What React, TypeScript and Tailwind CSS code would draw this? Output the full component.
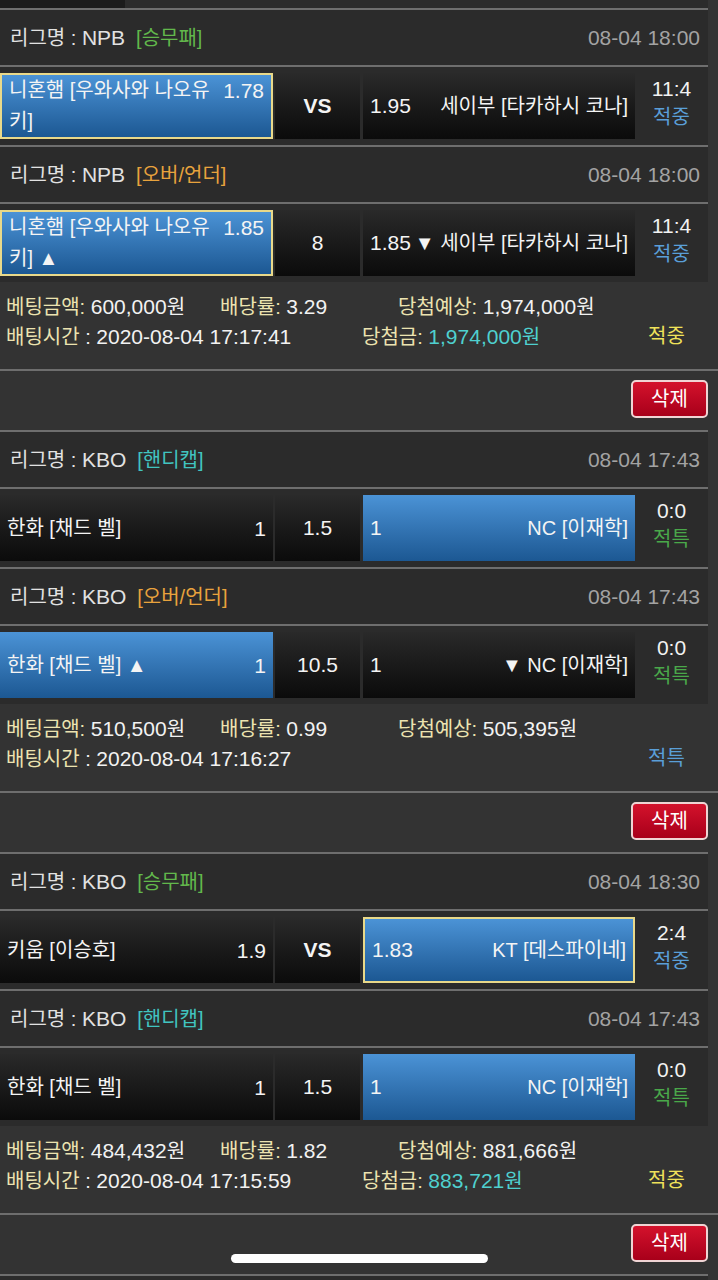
type Pick = 'home' | 'away';

type Match = {
  league: string;
  type: '승무패' | '오버/언더' | '핸디캡';
  date: string;
  home: string[];
  homeOdds: string;
  mid: string;
  bold?: boolean;
  awayOdds: string;
  away: string;
  pick: Pick;
  outlined?: boolean;
  score: string;
  result: '적중' | '적특';
};

type Bet = {
  matches: Match[];
  amount: string;
  rate: string;
  expected: string;
  time: string;
  won?: string;
  status: '적중' | '적특';
};

const bets: Bet[] = [
  {
    matches: [
      {
        league: 'NPB', type: '승무패', date: '08-04 18:00',
        home: ['니혼햄 [우와사와 나오유', '키]'], homeOdds: '1.78',
        mid: 'VS', bold: true, awayOdds: '1.95', away: '세이부 [타카하시 코나]',
        pick: 'home', outlined: true, score: '11:4', result: '적중',
      },
      {
        league: 'NPB', type: '오버/언더', date: '08-04 18:00',
        home: ['니혼햄 [우와사와 나오유', '키] ▲'], homeOdds: '1.85',
        mid: '8', awayOdds: '1.85', away: '▼ 세이부 [타카하시 코나]',
        pick: 'home', outlined: true, score: '11:4', result: '적중',
      },
    ],
    amount: '600,000', rate: '3.29', expected: '1,974,000',
    time: '2020-08-04 17:17:41', won: '1,974,000', status: '적중',
  },
  {
    matches: [
      {
        league: 'KBO', type: '핸디캡', date: '08-04 17:43',
        home: ['한화 [채드 벨]'], homeOdds: '1',
        mid: '1.5', awayOdds: '1', away: 'NC [이재학]',
        pick: 'away', score: '0:0', result: '적특',
      },
      {
        league: 'KBO', type: '오버/언더', date: '08-04 17:43',
        home: ['한화 [채드 벨] ▲'], homeOdds: '1',
        mid: '10.5', awayOdds: '1', away: '▼ NC [이재학]',
        pick: 'home', score: '0:0', result: '적특',
      },
    ],
    amount: '510,500', rate: '0.99', expected: '505,395',
    time: '2020-08-04 17:16:27', status: '적특',
  },
  {
    matches: [
      {
        league: 'KBO', type: '승무패', date: '08-04 18:30',
        home: ['키움 [이승호]'], homeOdds: '1.9',
        mid: 'VS', bold: true, awayOdds: '1.83', away: 'KT [데스파이네]',
        pick: 'away', outlined: true, score: '2:4', result: '적중',
      },
      {
        league: 'KBO', type: '핸디캡', date: '08-04 17:43',
        home: ['한화 [채드 벨]'], homeOdds: '1',
        mid: '1.5', awayOdds: '1', away: 'NC [이재학]',
        pick: 'away', score: '0:0', result: '적특',
      },
    ],
    amount: '484,432', rate: '1.82', expected: '881,666',
    time: '2020-08-04 17:15:59', won: '883,721', status: '적중',
  },
];

const typeColor = (t: Match['type']) =>
  t === '승무패' ? 'text-[#62b84c]' : t === '오버/언더' ? 'text-[#e8a33d]' : 'text-[#41c4c0]';

// latin digits render a touch wider than the hangul in the original
const Num = ({ children, className = '' }: { children: React.ReactNode; className?: string }) => (
  <span className={`text-[21px] ${className}`}>{children}</span>
);

function LeagueHeader({ m }: { m: Match }) {
  return (
    <div className="w-[708px] h-[57px] border-t-2 border-[#6e6e6e] bg-[#2b2b2b] flex items-center justify-between pl-[10px] pr-[8px]">
      <div className="flex items-center">
        <span className="text-[#e2e2e2]">
          리그명 : <Num>{m.league}</Num>
        </span>
        <span className={`ml-[11px] ${typeColor(m.type)}`}>[{m.type}]</span>
      </div>
      <Num className="text-[#a3a3a3]">{m.date}</Num>
    </div>
  );
}

function TeamCell({ active, outlined, width, children }: { active: boolean; outlined?: boolean; width: string; children: React.ReactNode }) {
  const bg = active
    ? 'bg-linear-to-b from-[#4b93d6] to-[#1c5893]'
    : 'bg-linear-to-b from-[#2a2a2a] to-[#0b0b0b]';
  const border = outlined && active ? 'border-2 border-[#e9d98a]' : '';
  return (
    <div className={`${width} h-[66px] shrink-0 flex items-center px-[7px] text-[#f4f4f4] ${bg} ${border}`}>
      {children}
    </div>
  );
}

function MatchRow({ m }: { m: Match }) {
  return (
    <div className="w-[708px] h-[80px] border-t-2 border-[#6e6e6e] bg-[#2b2b2b] flex pt-[6px]">
      <TeamCell active={m.pick === 'home'} outlined={m.outlined} width="w-[273px]">
        <div className="flex-1 flex items-start justify-between leading-[31px]">
          <div className="whitespace-nowrap">
            {m.home.map((l, i) => (
              <div key={i}>{l}</div>
            ))}
          </div>
          <Num className="pl-2">{m.homeOdds}</Num>
        </div>
      </TeamCell>
      <div
        className={`ml-[2px] w-[85px] h-[66px] shrink-0 flex items-center justify-center bg-linear-to-b from-[#2a2a2a] to-[#0b0b0b] text-[#f4f4f4] text-[21px] ${m.bold ? 'font-bold' : ''}`}
      >
        {m.mid}
      </div>
      <div className="ml-[3px]">
        <TeamCell active={m.pick === 'away'} outlined={m.outlined} width="w-[272px]">
          <div className="flex-1 flex items-center justify-between whitespace-nowrap">
            <Num>{m.awayOdds}</Num>
            <span>{m.away}</span>
          </div>
        </TeamCell>
      </div>
      <div className="flex-1 h-[66px] pb-[6px] flex flex-col items-center justify-center leading-[29px]">
        <Num className="text-[#f2f2f2]">{m.score}</Num>
        <span className={m.result === '적중' ? 'text-[#5a9fd8]' : 'text-[#4aa84a]'}>{m.result}</span>
      </div>
    </div>
  );
}

const Label = ({ children }: { children: React.ReactNode }) => (
  <span className="text-[#ece3b0]">{children}</span>
);

function Summary({ b }: { b: Bet }) {
  return (
    <div className="w-full h-[87px] pt-[10px] pl-[6px] leading-[29px] text-[#f2f2f2] whitespace-nowrap">
      <div className="flex">
        <span className="w-[214px]"><Label>베팅금액:</Label> <Num>{b.amount}</Num>원</span>
        <span className="w-[178px]"><Label>배당률:</Label> <Num>{b.rate}</Num></span>
        <span><Label>당첨예상:</Label> <Num>{b.expected}</Num>원</span>
      </div>
      <div className="flex">
        <span className="w-[356px]"><Label>배팅시간</Label> : <Num>{b.time}</Num></span>
        <span className="w-[286px]">
          {b.won && (
            <>
              <Label>당첨금:</Label>{' '}
              <span className="text-[#4fd0cf]"><Num>{b.won}</Num>원</span>
            </>
          )}
        </span>
        <span className={b.status === '적중' ? 'text-[#efe25a]' : 'text-[#5a9fd8]'}>{b.status}</span>
      </div>
    </div>
  );
}

function DeleteRow() {
  return (
    <div className="w-full h-[61px] border-t-2 border-[#6e6e6e] flex justify-end items-start pt-[9px] pr-[10px]">
      <button className="w-[77px] h-[38px] rounded-[5px] border-2 border-[#f0d4d4] bg-linear-to-b from-[#d4122c] to-[#a8001a] text-white text-[20px] leading-none">
        삭제
      </button>
    </div>
  );
}

export default function App() {
  return (
    <div className="relative w-[718px] h-[1280px] overflow-hidden bg-[#333333] text-[20px] font-['Liberation_Sans','Noto_Sans_CJK_KR',sans-serif]">
      <div className="w-[708px] h-[8px] flex">
        <div className="w-[125px] bg-[#1b1b1b]" />
        <div className="flex-1 bg-[#2b2b2b]" />
      </div>

      {bets.map((b, i) => (
        <div key={i}>
          {b.matches.map((m, j) => (
            <div key={j}>
              <LeagueHeader m={m} />
              <MatchRow m={m} />
            </div>
          ))}
          <Summary b={b} />
          <DeleteRow />
        </div>
      ))}

      <div className="w-[708px] h-[6px] border-t-2 border-[#6e6e6e] bg-[#2b2b2b]" />

      {/* iOS home indicator */}
      <div className="absolute left-[231px] top-[1254px] w-[257px] h-[9px] rounded-full bg-white" />
    </div>
  );
}
